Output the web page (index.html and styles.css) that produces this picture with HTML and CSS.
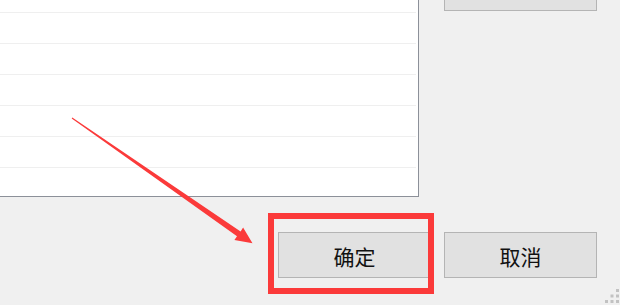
FILE: index.html
```html
<!DOCTYPE html>
<html lang="zh-CN">
<head>
<meta charset="utf-8">
<title>Dialog</title>
<link rel="stylesheet" href="styles.css">
</head>
<body>
<div class="dialog">
  <div class="top">
    <div class="list">
      <div class="row first"></div>
      <div class="row"></div>
      <div class="row"></div>
      <div class="row"></div>
      <div class="row"></div>
      <div class="row"></div>
      <div class="row"></div>
    </div>
    <div class="side">
      <button class="btn side-btn"></button>
    </div>
  </div>
  <div class="actions">
    <button class="btn">确定</button>
    <button class="btn">取消</button>
  </div>
  <svg class="overlay" width="620" height="305" viewBox="0 0 620 305" xmlns="http://www.w3.org/2000/svg">
    <polygon fill="#fb3a3a" points="72.3,117.6 240.6,231.4 243.1,227.6 252.5,243.3 234.4,240 237,236.2 71.7,118.4"/>
    <rect x="271" y="216" width="160" height="75" fill="none" stroke="#fb3a3a" stroke-width="6"/>
  </svg>
  <svg class="grip" width="16" height="16" viewBox="0 0 16 16" xmlns="http://www.w3.org/2000/svg">
    <g fill="#c2c2c2">
      <rect x="12" y="0" width="3" height="3"/>
      <rect x="6.5" y="5.5" width="3" height="3"/>
      <rect x="12" y="5.5" width="3" height="3"/>
      <rect x="1" y="11" width="3" height="3"/>
      <rect x="6.5" y="11" width="3" height="3"/>
      <rect x="12" y="11" width="3" height="3"/>
    </g>
  </svg>
</div>
</body>
</html>
```
FILE: styles.css
```css
html, body {
  margin: 0;
  padding: 0;
  background: #f0f0f0;
  overflow: hidden;
}
body {
  width: 620px;
  height: 305px;
  font-family: "Noto Sans CJK SC", "Noto Sans", sans-serif;
}
.dialog {
  position: relative;
  width: 620px;
  height: 305px;
  overflow: hidden;
}
.top {
  display: flex;
  height: 197px;
}
.list {
  width: 418px;
  height: 196px;
  background: #ffffff;
  border-right: 1px solid #8c9099;
  border-bottom: 1px solid #8c9099;
  overflow: hidden;
  flex: none;
}
.row {
  height: 30px;
  margin-right: 2px;
  border-bottom: 1px solid #efefef;
}
.row.first {
  margin-top: -18px;
}
.side {
  margin-left: 25px;
}
.btn {
  box-sizing: border-box;
  width: 153px;
  height: 46px;
  background: #e1e1e1;
  border: 1px solid #b4b4b4;
  border-radius: 0;
  padding: 0;
  font-family: "Noto Sans CJK SC", "Noto Sans", sans-serif;
  font-size: 21px;
  color: #111;
  line-height: 46px;
}
.side-btn {
  display: block;
  margin-top: -35px;
}
.actions {
  display: flex;
  gap: 13px;
  margin-top: 35px;
  padding-left: 278px;
}
.overlay {
  position: absolute;
  left: 0;
  top: 0;
}
.grip {
  position: absolute;
  left: 604px;
  top: 289px;
}
```
